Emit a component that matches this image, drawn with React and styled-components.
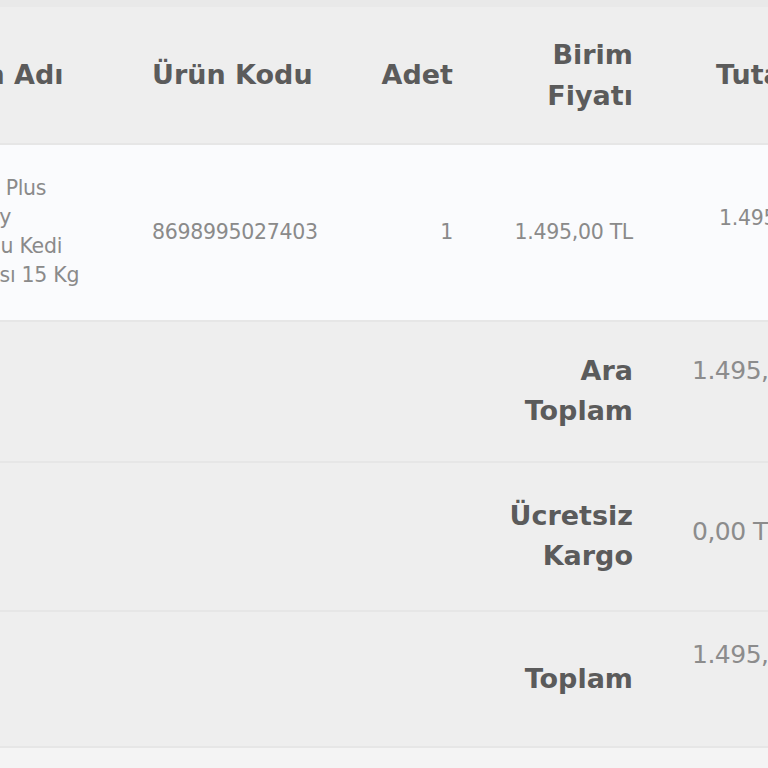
import React from "react";
import styled, { createGlobalStyle } from "styled-components";

const Global = createGlobalStyle`
  html, body { margin: 0; padding: 0; background: #f4f4f4; }
`;

const Page = styled.div`
  width: 768px;
  height: 768px;
  overflow: hidden;
  background: #f4f4f4;
`;

const Table = styled.table`
  border-collapse: collapse;
  table-layout: fixed;
  width: 925px;
  margin-left: -80px;
  font-family: "DejaVu Sans", "Liberation Sans", sans-serif;
  border-top: 7px solid #e9e9e9;
`;

const Row = styled.tr`
  height: ${(p) => p.$h}px;
  background: ${(p) => (p.$light ? "#fafbfd" : "#eeeeee")};
  border-bottom: 2px solid #e6e6e6;
`;

const Th = styled.th`
  padding: 0 12px;
  vertical-align: middle;
  text-align: ${(p) => p.$align || "left"};
  padding-left: ${(p) => (p.$pl != null ? p.$pl : 12)}px;
  font-size: 27px;
  line-height: 41px;
  font-weight: 700;
  color: #5b5b5b;
`;

const Td = styled.td`
  padding: 0 12px;
  padding-left: ${(p) => (p.$pl != null ? p.$pl : 12)}px;
  vertical-align: middle;
  text-align: ${(p) => p.$align || "left"};
  font-size: 20.5px;
  line-height: 29px;
  font-weight: 400;
  color: #8a8a8a;
  letter-spacing: -0.3px;
`;

const Line = styled.span`
  display: block;
  white-space: nowrap;
`;

const Raised = styled.div`
  white-space: nowrap;
  padding-bottom: ${(p) => p.$lift * 2}px;
`;

const SumLabel = styled.td`
  padding: 0 12px;
  vertical-align: middle;
  text-align: right;
  font-size: 27px;
  line-height: 40px;
  font-weight: 700;
  color: #5b5b5b;
`;

const SumValue = styled.td`
  padding: 0 12px 0 47px;
  vertical-align: middle;
  text-align: left;
  font-size: 25px;
  line-height: 40px;
  font-weight: 400;
  color: #8c8c8c;
  letter-spacing: -0.5px;
`;

const totals = [
  { label: ["Ara", "Toplam"], value: "1.495,00 TL", h: 141, lift: 20 },
  { label: ["Ücretsiz", "Kargo"], value: "0,00 TL", h: 149, lift: 4 },
  { label: ["Toplam"], value: "1.495,00 TL", h: 136, lift: 24 },
];

export default function App() {
  return (
    <Page>
      <Global />
      <Table>
        <colgroup>
          <col style={{ width: 220 }} />
          <col style={{ width: 200 }} />
          <col style={{ width: 125 }} />
          <col style={{ width: 180 }} />
          <col style={{ width: 200 }} />
        </colgroup>
        <thead>
          <Row $h={140}>
            <Th $pl={11}>Ürün Adı</Th>
            <Th>Ürün Kodu</Th>
            <Th $align="right">Adet</Th>
            <Th $align="right">
              <Line>Birim</Line>
              <Line>Fiyatı</Line>
            </Th>
            <Th $pl={71}>Tutar</Th>
          </Row>
        </thead>
        <tbody>
          <Row $h={177} $light>
            <Td $pl={18}>
              <Line>Reflex Plus</Line>
              <Line>Urinary</Line>
              <Line>Tavuklu Kedi</Line>
              <Line>Maması 15 Kg</Line>
            </Td>
            <Td>8698995027403</Td>
            <Td $align="right">1</Td>
            <Td $align="right">1.495,00 TL</Td>
            <Td $pl={74}>
              <Raised $lift={14}>1.495,00 TL</Raised>
            </Td>
          </Row>
          {totals.map((t) => (
            <Row key={t.label.join(" ")} $h={t.h}>
              <SumLabel colSpan={4}>
                {t.label.map((l) => (
                  <Line key={l}>{l}</Line>
                ))}
              </SumLabel>
              <SumValue>
                <Raised $lift={t.lift}>{t.value}</Raised>
              </SumValue>
            </Row>
          ))}
        </tbody>
      </Table>
    </Page>
  );
}
